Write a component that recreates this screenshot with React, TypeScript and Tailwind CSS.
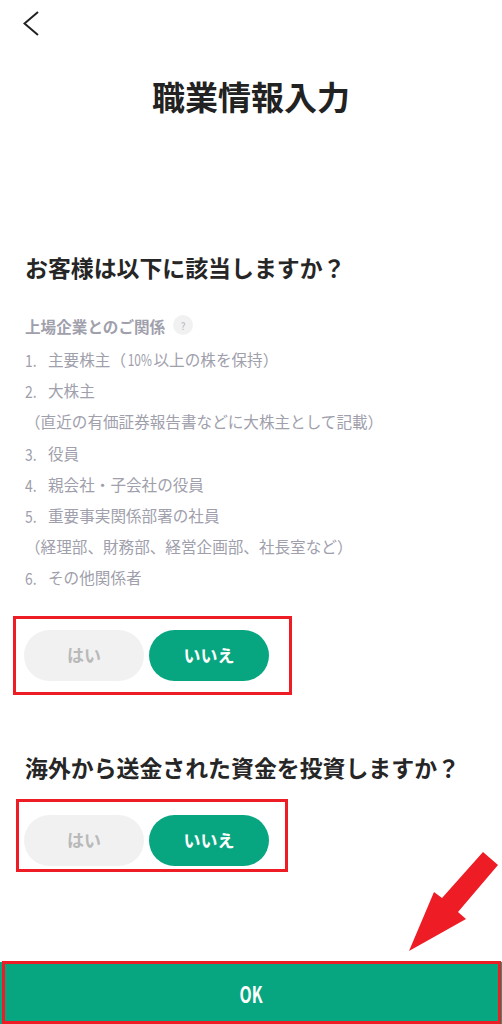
import React from 'react';

const sans = "font-['Noto_Sans_CJK_JP',sans-serif]";

const items: { no?: string; text: React.ReactNode; key: string }[] = [
  {
    no: '1.',
    key: 'a',
    text: (
      <>
        主要株主（<span className="inline-block -mx-[3px] text-[16.5px] scale-x-[0.72]">10%</span>以上の株を保持）
      </>
    ),
  },
  { no: '2.', key: 'b', text: '大株主' },
  { key: 'c', text: '（直近の有価証券報告書などに大株主として記載）' },
  { no: '3.', key: 'd', text: '役員' },
  { no: '4.', key: 'e', text: '親会社・子会社の役員' },
  { no: '5.', key: 'f', text: '重要事実関係部署の社員' },
  { key: 'g', text: '（経理部、財務部、経営企画部、社長室など）' },
  { no: '6.', key: 'h', text: 'その他関係者' },
];

const Frame: React.FC<{ className: string }> = ({ className }) => (
  <div className={`absolute border-[3px] border-[#ee1c25] pointer-events-none ${className}`} />
);

const YesNo: React.FC = () => (
  <div className="flex gap-[5px]">
    <button className="w-[120px] h-[51px] rounded-full bg-[#f1f1f1] text-[#b9b9b9] text-[17px] font-bold">はい</button>
    <button className="w-[120px] h-[51px] rounded-full bg-[#08a680] text-white text-[17px] font-bold">いいえ</button>
  </div>
);

export default function App() {
  return (
    <div className={`relative w-[502px] h-[1024px] bg-white overflow-hidden flex flex-col ${sans}`}>
      <div className="pl-[23px] pt-[11px]">
        <svg width="16" height="25" viewBox="0 0 16 25" fill="none" stroke="#222" strokeWidth="2">
          <path d="M15 1 L1.5 12.5 L15 24" />
        </svg>
      </div>

      <h1 className="mt-[35px] h-[50px] leading-[50px] text-center text-[33px] font-bold text-[#222]">職業情報入力</h1>

      <div className="pl-[25px] flex-1 flex flex-col">
        <h2 className="mt-[129px] h-[34px] leading-[34px] text-[22.9px] font-bold text-[#262626]">お客様は以下に該当しますか？</h2>

        <div className="mt-[30px] h-[26px] flex items-center gap-[8px]">
          <span className="text-[15.6px] font-bold text-[#a0a0ac]">上場企業とのご関係</span>
          <span className="w-[20px] h-[20px] -mt-[4px] rounded-full bg-[#f1f1f1] flex items-center justify-center text-[10px] text-[#b5b5bd]">?</span>
        </div>

        <ul className="mt-[4px] flex flex-col text-[15.6px] text-[#a0a0ac]">
          {items.map((item) => (
            <li key={item.key} className="h-[31.2px] leading-[31.2px] flex">
              {item.no && (
                <span className="w-[23px]">
                  <span className="inline-block origin-left text-[17px] scale-x-[0.82]">{item.no}</span>
                </span>
              )}
              <span>{item.text}</span>
            </li>
          ))}
        </ul>

        <div className="mt-[36px] -ml-[1px]">
          <YesNo />
        </div>

        <h2 className="mt-[69px] h-[34px] leading-[34px] text-[22.9px] font-bold text-[#262626] whitespace-nowrap">海外から送金された資金を投資しますか？</h2>

        <div className="mt-[31px] -ml-[1px]">
          <YesNo />
        </div>
      </div>

      <button className="h-[62px] bg-[#08a680] text-white text-[22px] font-bold">
        <span className="inline-block scale-x-[0.72]">OK</span>
      </button>

      {/* annotations drawn over the screenshot */}
      <Frame className="left-[13px] top-[616px] w-[279px] h-[79px]" />
      <Frame className="left-[16px] top-[799px] w-[272px] h-[73px]" />
      <Frame className="left-[2px] top-[961px] w-[499px] h-[63px]" />
      <svg className="absolute left-[405px] top-[848px]" width="97" height="106" viewBox="0 0 97 106" fill="#ee1c25">
        <path d="M78 4 L93 17 L53 64 L61 71 L4 103 L29 44 L37 50 Z" />
      </svg>
    </div>
  );
}
